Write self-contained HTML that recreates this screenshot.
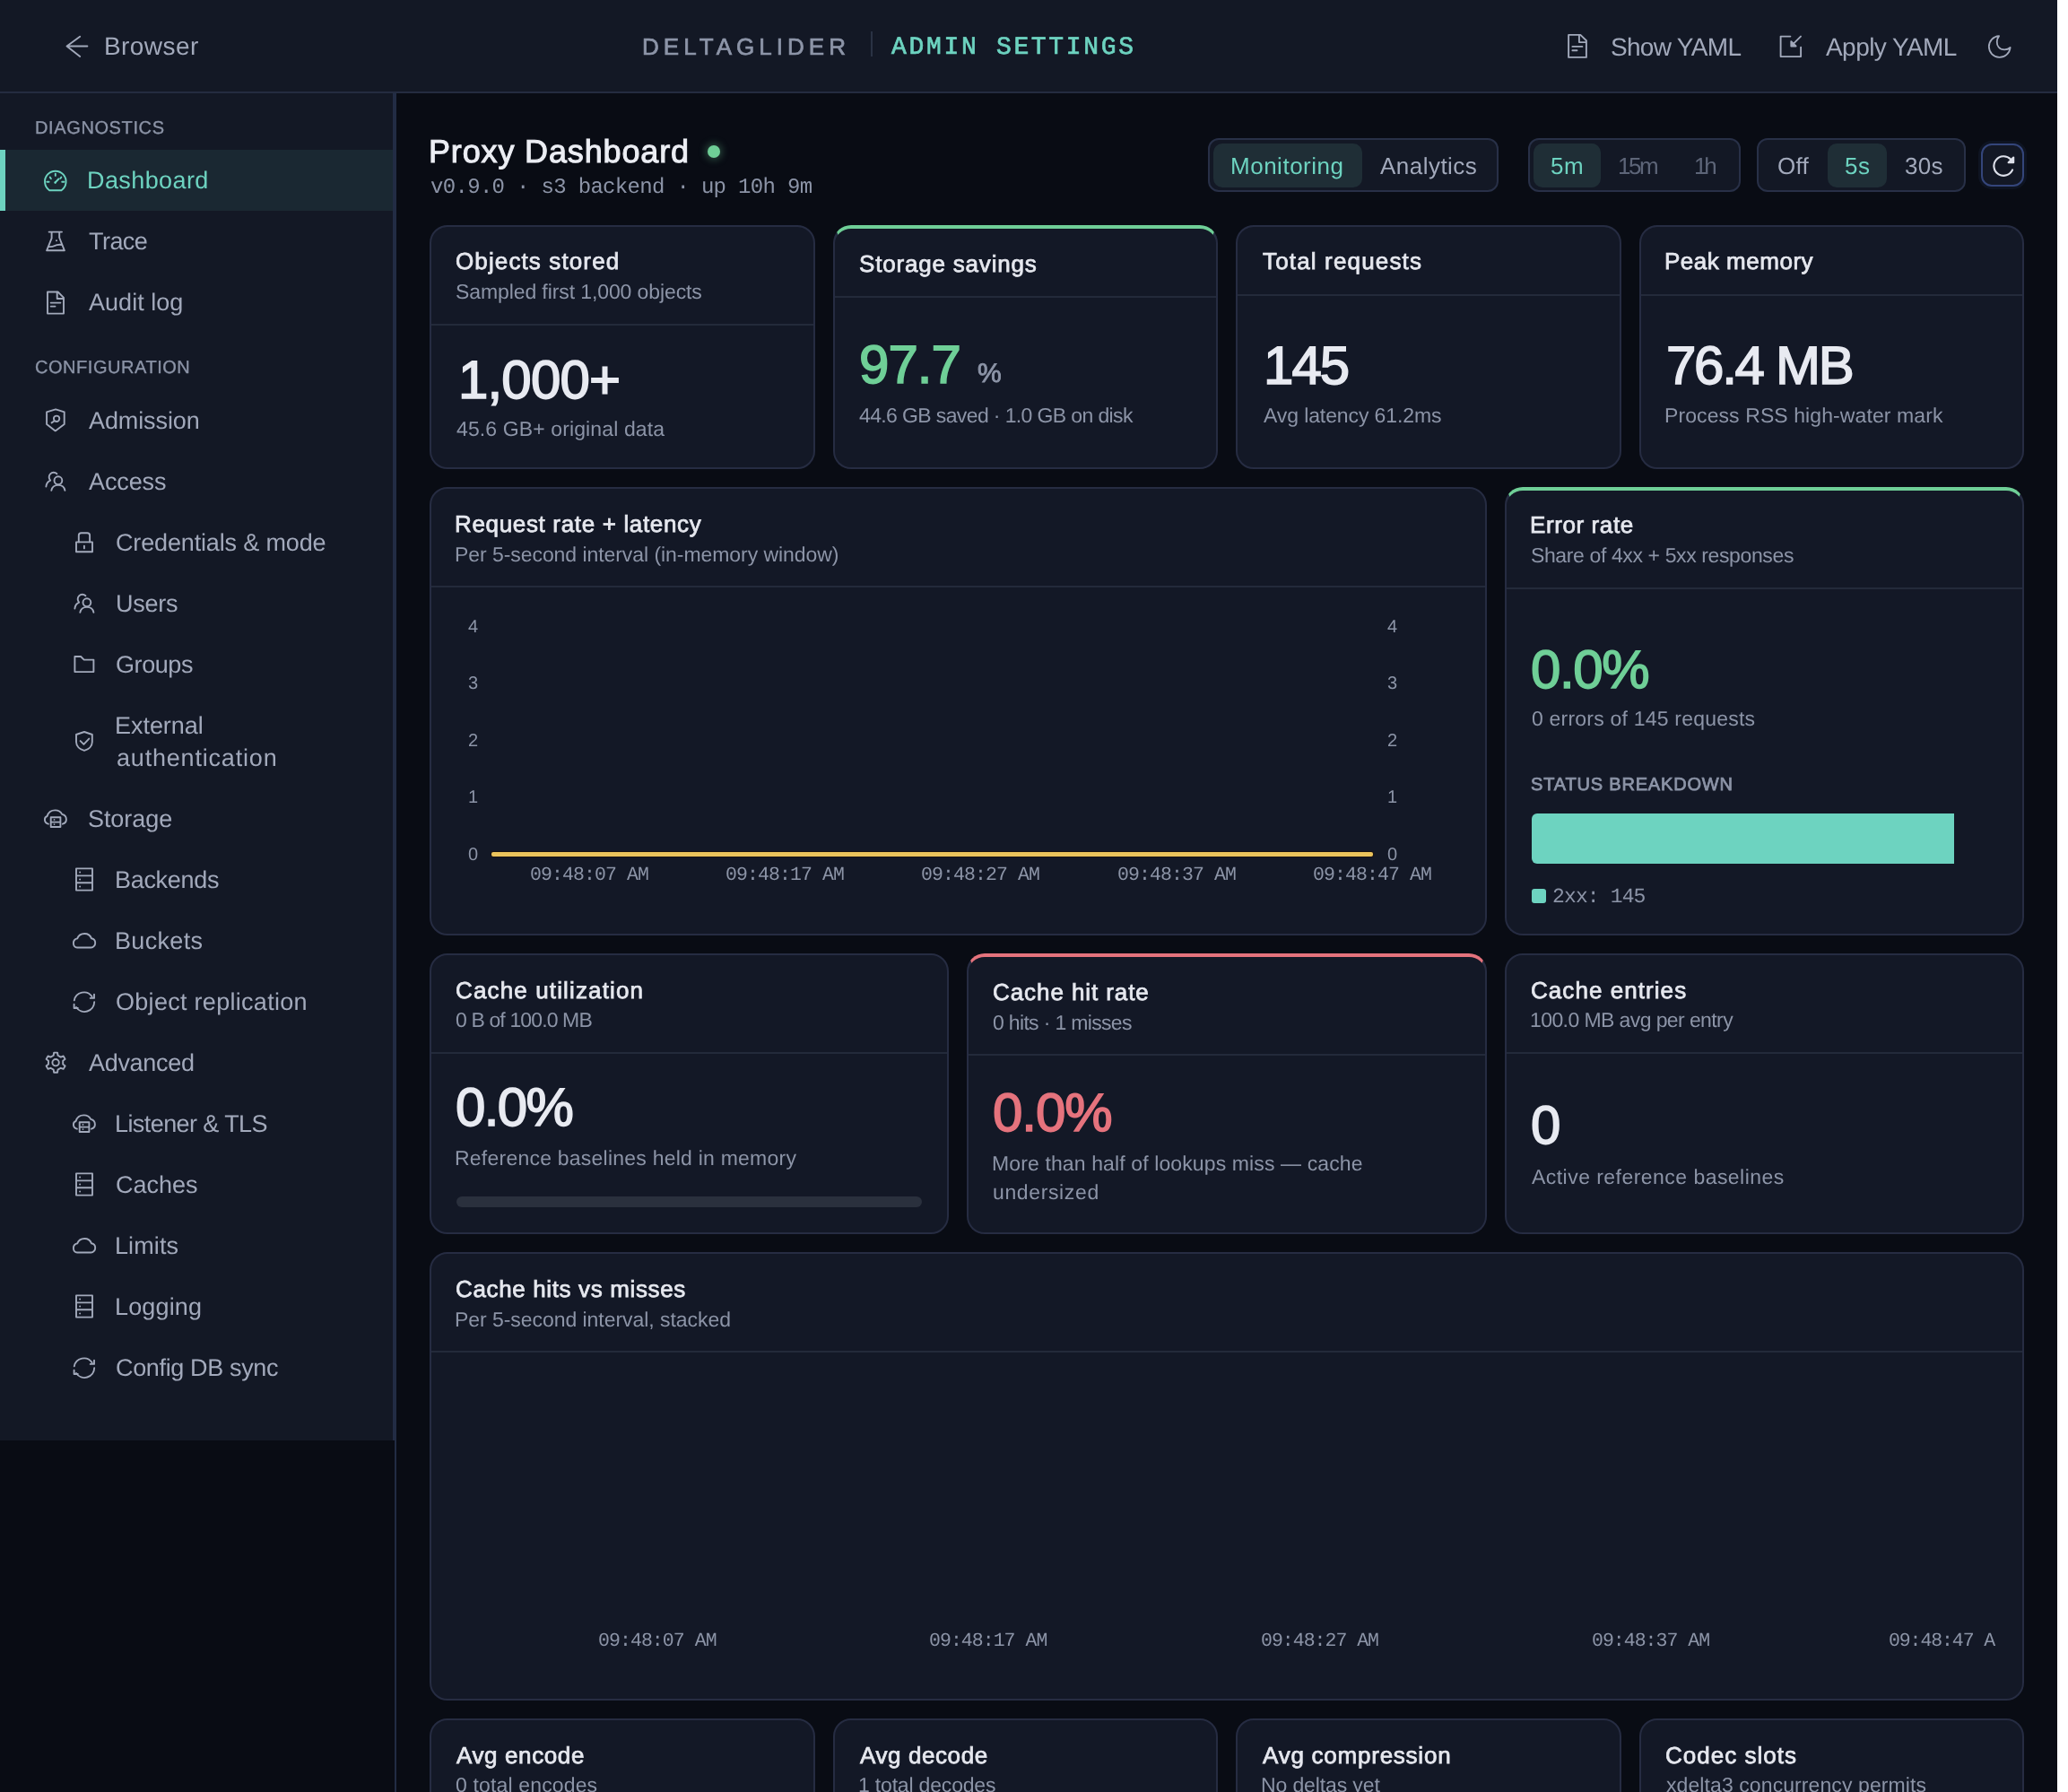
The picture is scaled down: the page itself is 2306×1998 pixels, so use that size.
<!DOCTYPE html>
<html><head><meta charset="utf-8"><title>DeltaGlider Admin Settings</title>
<style>
*{margin:0;padding:0;box-sizing:border-box}
html,body{width:2306px;height:1998px;overflow:hidden;background:#ffffff}
body{font-family:"Liberation Sans",sans-serif;position:relative}
#app{position:absolute;left:0;top:0;width:2294px;height:1998px;overflow:hidden;background:#090c14}
.t{position:absolute;white-space:nowrap;line-height:1;-webkit-font-smoothing:antialiased;will-change:transform;text-rendering:geometricPrecision}
.r{position:absolute}
.ic{position:absolute;overflow:visible}
</style></head><body><div id="app">
<div class="r" style="left:0px;top:0px;width:2294px;height:102px;background:#131825"></div>
<div class="r" style="left:0px;top:102px;width:2294px;height:2px;background:#242c40"></div>
<svg class="ic" style="left:70.0px;top:36.0px;color:#a2a9bb" width="32" height="32" viewBox="0 0 32 32" fill="none" stroke="currentColor" stroke-width="1.9" stroke-linecap="round" stroke-linejoin="round"><path d="M27.4 15.5H4.6M19.2 4.7L4.5 15.5L19.2 26.9"/></svg>
<div class="t " style="left:115.6px;top:38.3px;font-size:28px;color:#a2a9bb;letter-spacing:0.42px;">Browser</div>
<div class="t " style="left:715.9px;top:39.3px;font-size:26px;color:#8d95a8;-webkit-text-stroke:0.70px #8d95a8;letter-spacing:5.02px;">DELTAGLIDER</div>
<div class="r" style="left:971px;top:35px;width:2px;height:28px;background:#2a3244"></div>
<div class="t " style="left:993.8px;top:39.5px;font-size:28px;color:#6dd3c0;font-family:'Liberation Mono',monospace;letter-spacing:2.68px;-webkit-text-stroke:0.7px #6dd3c0;">ADMIN SETTINGS</div>
<svg class="ic" style="left:1743.0px;top:36.0px;color:#a2a9bb" width="32" height="32" viewBox="0 0 32 32" fill="none" stroke="currentColor" stroke-width="1.9" stroke-linecap="round" stroke-linejoin="round"><path d="M6.1 2.9H19.3L25.9 9.3V27.9H6.1Z"/><path d="M17.9 3.2V11.1H25.6M10.4 15.9H21.4M10.4 20.2H15.5"/></svg>
<div class="t " style="left:1796.3px;top:38.7px;font-size:28px;color:#a2a9bb;letter-spacing:-0.69px;">Show YAML</div>
<svg class="ic" style="left:1981.0px;top:36.0px;color:#a2a9bb" width="32" height="32" viewBox="0 0 32 32" fill="none" stroke="currentColor" stroke-width="1.9" stroke-linecap="round" stroke-linejoin="round"><path d="M15.4 4.6H4.6V27.1H27.1V16.6M27 4.6L18 13.6"/><path d="M16.3 10.2V15.5H21.6Z" fill="currentColor"/></svg>
<div class="t " style="left:2035.9px;top:38.7px;font-size:28px;color:#a2a9bb;letter-spacing:-0.56px;">Apply YAML</div>
<svg class="ic" style="left:2213.0px;top:36.0px;color:#a2a9bb" width="32" height="32" viewBox="0 0 32 32" fill="none" stroke="currentColor" stroke-width="1.8" stroke-linecap="round" stroke-linejoin="round"><path d="M16.1 4.1A11.9 11.9 0 1 0 28.6 17C25.5 20 19 20.5 15.6 16.5C13.2 13.7 13 8 16.1 4.1Z"/></svg>
<div class="r" style="left:0px;top:104px;width:438px;height:1502px;background:#131825"></div>
<div class="r" style="left:438px;top:104px;width:2px;height:1502px;background:#222c44"></div>
<div class="r" style="left:440px;top:104px;width:2px;height:1894px;background:#222c44"></div>
<div class="t " style="left:39.4px;top:132.8px;font-size:20px;color:#8c94a7;-webkit-text-stroke:0.35px #8c94a7;letter-spacing:0.62px;">DIAGNOSTICS</div>
<div class="r" style="left:0px;top:167px;width:438px;height:68px;background:#1a2832"></div>
<div class="r" style="left:0px;top:167px;width:6px;height:68px;background:#6dd3c0"></div>
<div class="t " style="left:39.0px;top:400.1px;font-size:20px;color:#8c94a7;-webkit-text-stroke:0.35px #8c94a7;letter-spacing:0.54px;">CONFIGURATION</div>
<div class="t " style="left:97.1px;top:188.1px;font-size:27px;color:#6dd3c0;letter-spacing:0.4px;">Dashboard</div>
<svg class="ic" style="left:46.0px;top:184.5px;color:#6dd3c0" width="32" height="32" viewBox="0 0 32 32" fill="none" stroke="currentColor" stroke-width="1.9" stroke-linecap="round" stroke-linejoin="round"><path d="M9.1 27.2A11.8 11.8 0 1 1 22.5 27.2Z"/><path d="M15.8 8.6V10.9M9.8 12.6L10.9 14.2M22.3 12.6L21.3 14M6.3 17.7H8.6M23.2 17.7H25.5M15.6 18.5L19.4 14.5"/><circle cx="15.6" cy="18.5" r="1.2" fill="currentColor" stroke="none"/></svg>
<div class="t " style="left:98.7px;top:256.1px;font-size:27px;color:#a2a9bb;letter-spacing:-0.55px;">Trace</div>
<svg class="ic" style="left:46.0px;top:252.5px;color:#a2a9bb" width="32" height="32" viewBox="0 0 32 32" fill="none" stroke="currentColor" stroke-width="1.9" stroke-linecap="round" stroke-linejoin="round"><g transform="translate(0,-1)"><path d="M8.6 6.6H23M11.6 6.9V13.7L6.1 27.3H25.9L20.2 13V6.9M8.9 23C12.5 23.7 15.5 21.5 17.5 21.1C19.6 20.7 21.5 20.7 23.2 21"/><circle cx="17" cy="16.2" r="1" fill="currentColor" stroke="none"/></g></svg>
<div class="t " style="left:99.2px;top:324.1px;font-size:27px;color:#a2a9bb;letter-spacing:0.03px;">Audit log</div>
<svg class="ic" style="left:46.0px;top:320.5px;color:#a2a9bb" width="32" height="32" viewBox="0 0 32 32" fill="none" stroke="currentColor" stroke-width="1.9" stroke-linecap="round" stroke-linejoin="round"><g transform="translate(0,-1)"><path d="M7 5.5H18.6L25 11.9V29.6H7Z"/><path d="M17.7 5.8V13H24.7M10.7 17.6H21.4M10.7 21.6H15.5"/></g></svg>
<div class="t " style="left:99.2px;top:456.1px;font-size:27px;color:#a2a9bb;letter-spacing:-0.1px;">Admission</div>
<svg class="ic" style="left:46.0px;top:452.5px;color:#a2a9bb" width="32" height="32" viewBox="0 0 32 32" fill="none" stroke="currentColor" stroke-width="1.9" stroke-linecap="round" stroke-linejoin="round"><g transform="translate(0,-1)"><path d="M6.1 7.3L16.1 4.4L25.7 7.3V21L15.7 28.4L6.1 21Z"/><circle cx="17.1" cy="14.8" r="3.2"/><path d="M14.8 17.2L11.6 19.4"/></g></svg>
<div class="t " style="left:99.2px;top:524.1px;font-size:27px;color:#a2a9bb;letter-spacing:-0.1px;">Access</div>
<svg class="ic" style="left:46.0px;top:520.5px;color:#a2a9bb" width="32" height="32" viewBox="0 0 32 32" fill="none" stroke="currentColor" stroke-width="1.9" stroke-linecap="round" stroke-linejoin="round"><g transform="translate(0,-1)"><circle cx="18.9" cy="15.7" r="4.4"/><path d="M11.3 26.9C12 23 15 20.9 18.9 20.9C22.8 20.9 25.8 23 26.4 26.9"/><path d="M17.4 8.3A4.4 4.4 0 1 0 10.2 15.6C7.6 16.6 5.8 19 5.4 22.5"/></g></svg>
<div class="t " style="left:129.2px;top:592.1px;font-size:27px;color:#a2a9bb;letter-spacing:-0.15px;">Credentials &amp; mode</div>
<svg class="ic" style="left:78.0px;top:588.5px;color:#a2a9bb" width="32" height="32" viewBox="0 0 32 32" fill="none" stroke="currentColor" stroke-width="1.9" stroke-linecap="round" stroke-linejoin="round"><g transform="translate(0,-1)"><path d="M7 16.4H25V27.3H7Z"/><path d="M9.8 16.4V9Q9.8 6.2 12.6 6.2H19.3Q22.1 6.2 22.1 9V16.4M15.9 20.6V23.4"/></g></svg>
<div class="t " style="left:128.5px;top:660.1px;font-size:27px;color:#a2a9bb;letter-spacing:-0.27px;">Users</div>
<svg class="ic" style="left:78.0px;top:656.5px;color:#a2a9bb" width="32" height="32" viewBox="0 0 32 32" fill="none" stroke="currentColor" stroke-width="1.9" stroke-linecap="round" stroke-linejoin="round"><g transform="translate(0,-1)"><circle cx="18.9" cy="15.7" r="4.4"/><path d="M11.3 26.9C12 23 15 20.9 18.9 20.9C22.8 20.9 25.8 23 26.4 26.9"/><path d="M17.4 8.3A4.4 4.4 0 1 0 10.2 15.6C7.6 16.6 5.8 19 5.4 22.5"/></g></svg>
<div class="t " style="left:129.2px;top:728.1px;font-size:27px;color:#a2a9bb;letter-spacing:-0.42px;">Groups</div>
<svg class="ic" style="left:78.0px;top:724.5px;color:#a2a9bb" width="32" height="32" viewBox="0 0 32 32" fill="none" stroke="currentColor" stroke-width="1.9" stroke-linecap="round" stroke-linejoin="round"><g transform="translate(0,-1)"><path d="M5.4 8H12.1L15.7 11.6H26.4V25.1H5.4Z"/></g></svg>
<div class="t " style="left:98.1px;top:900.1px;font-size:27px;color:#a2a9bb;letter-spacing:-0.07px;">Storage</div>
<svg class="ic" style="left:46.0px;top:896.5px;color:#a2a9bb" width="32" height="32" viewBox="0 0 32 32" fill="none" stroke="currentColor" stroke-width="1.9" stroke-linecap="round" stroke-linejoin="round"><path d="M7.9 21.7C5.5 20.8 3.9 19.1 3.9 16.9C3.9 14.8 5.2 13.4 6.6 13C7.8 9 11.3 6.4 15.5 6.4C19 6.4 21.8 8.1 23.2 10.9C26 11.5 27.9 13.9 27.9 16.8C27.9 19.1 26.2 21 23.9 21.7"/><path d="M10.7 14.2H21.4V25H10.7Z M10.7 19.6H21.4"/><circle cx="14.5" cy="16.9" r="0.9" fill="currentColor" stroke="none"/><circle cx="14.5" cy="22.1" r="0.9" fill="currentColor" stroke="none"/></svg>
<div class="t " style="left:128.4px;top:968.1px;font-size:27px;color:#a2a9bb;letter-spacing:-0.3px;">Backends</div>
<svg class="ic" style="left:78.0px;top:964.5px;color:#a2a9bb" width="32" height="32" viewBox="0 0 32 32" fill="none" stroke="currentColor" stroke-width="1.9" stroke-linecap="round" stroke-linejoin="round"><path d="M7 3.4H25V27.6H7Z M7 11.4H25M7 19.25H25"/><circle cx="11.1" cy="7.6" r="1" fill="currentColor" stroke="none"/><circle cx="11.1" cy="15.5" r="1" fill="currentColor" stroke="none"/><circle cx="11.1" cy="23.4" r="1" fill="currentColor" stroke="none"/></svg>
<div class="t " style="left:128.4px;top:1036.1px;font-size:27px;color:#a2a9bb;letter-spacing:0.32px;">Buckets</div>
<svg class="ic" style="left:78.0px;top:1032.5px;color:#a2a9bb" width="32" height="32" viewBox="0 0 32 32" fill="none" stroke="currentColor" stroke-width="1.9" stroke-linecap="round" stroke-linejoin="round"><path d="M8 23.5H23.5C26.1 23.5 28.2 21.1 28.2 18.3C28.2 15.7 26.5 13.8 24 13.3C22.8 10.1 19.8 8 16.3 8C12.5 8 9.3 10.3 8.2 13.4C5.7 14 3.9 16 3.9 18.5C3.9 21.3 5.7 23.5 8 23.5Z"/></svg>
<div class="t " style="left:129.3px;top:1104.1px;font-size:27px;color:#a2a9bb;letter-spacing:0.29px;">Object replication</div>
<svg class="ic" style="left:78.0px;top:1100.5px;color:#a2a9bb" width="32" height="32" viewBox="0 0 32 32" fill="none" stroke="currentColor" stroke-width="1.9" stroke-linecap="round" stroke-linejoin="round"><path d="M4.8 14.4A11 11 0 0 1 24.6 10.1M27 7.6V11.9H22.7M27.2 16.1A11 11 0 0 1 7 22M4.6 18.8V23H8.8"/></svg>
<div class="t " style="left:99.2px;top:1172.1px;font-size:27px;color:#a2a9bb;letter-spacing:-0.31px;">Advanced</div>
<svg class="ic" style="left:46.0px;top:1168.5px;color:#a2a9bb" width="32" height="32" viewBox="0 0 32 32" fill="none" stroke="currentColor" stroke-width="1.9" stroke-linecap="round" stroke-linejoin="round"><path d="M13.67 7.76 L14.16 4.67 L18.04 4.67 L18.53 7.76 L21.76 9.63 L24.68 8.50 L26.62 11.87 L24.19 13.83 L24.19 17.57 L26.62 19.53 L24.68 22.90 L21.76 21.77 L18.53 23.64 L18.04 26.73 L14.16 26.73 L13.67 23.64 L10.44 21.77 L7.52 22.90 L5.58 19.53 L8.01 17.57 L8.01 13.83 L5.58 11.87 L7.52 8.50 L10.44 9.63Z"/><circle cx="16.1" cy="15.7" r="3.7"/></svg>
<div class="t " style="left:128.4px;top:1240.1px;font-size:27px;color:#a2a9bb;letter-spacing:-0.58px;">Listener &amp; TLS</div>
<svg class="ic" style="left:78.0px;top:1236.5px;color:#a2a9bb" width="32" height="32" viewBox="0 0 32 32" fill="none" stroke="currentColor" stroke-width="1.9" stroke-linecap="round" stroke-linejoin="round"><path d="M7.9 21.7C5.5 20.8 3.9 19.1 3.9 16.9C3.9 14.8 5.2 13.4 6.6 13C7.8 9 11.3 6.4 15.5 6.4C19 6.4 21.8 8.1 23.2 10.9C26 11.5 27.9 13.9 27.9 16.8C27.9 19.1 26.2 21 23.9 21.7"/><path d="M10.7 14.2H21.4V25H10.7Z M10.7 19.6H21.4"/><circle cx="14.5" cy="16.9" r="0.9" fill="currentColor" stroke="none"/><circle cx="14.5" cy="22.1" r="0.9" fill="currentColor" stroke="none"/></svg>
<div class="t " style="left:129.2px;top:1308.1px;font-size:27px;color:#a2a9bb;letter-spacing:-0.02px;">Caches</div>
<svg class="ic" style="left:78.0px;top:1304.5px;color:#a2a9bb" width="32" height="32" viewBox="0 0 32 32" fill="none" stroke="currentColor" stroke-width="1.9" stroke-linecap="round" stroke-linejoin="round"><path d="M7 3.4H25V27.6H7Z M7 11.4H25M7 19.25H25"/><circle cx="11.1" cy="7.6" r="1" fill="currentColor" stroke="none"/><circle cx="11.1" cy="15.5" r="1" fill="currentColor" stroke="none"/><circle cx="11.1" cy="23.4" r="1" fill="currentColor" stroke="none"/></svg>
<div class="t " style="left:128.4px;top:1376.1px;font-size:27px;color:#a2a9bb;letter-spacing:0.1px;">Limits</div>
<svg class="ic" style="left:78.0px;top:1372.5px;color:#a2a9bb" width="32" height="32" viewBox="0 0 32 32" fill="none" stroke="currentColor" stroke-width="1.9" stroke-linecap="round" stroke-linejoin="round"><path d="M8 23.5H23.5C26.1 23.5 28.2 21.1 28.2 18.3C28.2 15.7 26.5 13.8 24 13.3C22.8 10.1 19.8 8 16.3 8C12.5 8 9.3 10.3 8.2 13.4C5.7 14 3.9 16 3.9 18.5C3.9 21.3 5.7 23.5 8 23.5Z"/></svg>
<div class="t " style="left:128.4px;top:1444.1px;font-size:27px;color:#a2a9bb;letter-spacing:0.15px;">Logging</div>
<svg class="ic" style="left:78.0px;top:1440.5px;color:#a2a9bb" width="32" height="32" viewBox="0 0 32 32" fill="none" stroke="currentColor" stroke-width="1.9" stroke-linecap="round" stroke-linejoin="round"><path d="M7 3.4H25V27.6H7Z M7 11.4H25M7 19.25H25"/><circle cx="11.1" cy="7.6" r="1" fill="currentColor" stroke="none"/><circle cx="11.1" cy="15.5" r="1" fill="currentColor" stroke="none"/><circle cx="11.1" cy="23.4" r="1" fill="currentColor" stroke="none"/></svg>
<div class="t " style="left:129.2px;top:1512.1px;font-size:27px;color:#a2a9bb;letter-spacing:-0.35px;">Config DB sync</div>
<svg class="ic" style="left:78.0px;top:1508.5px;color:#a2a9bb" width="32" height="32" viewBox="0 0 32 32" fill="none" stroke="currentColor" stroke-width="1.9" stroke-linecap="round" stroke-linejoin="round"><path d="M4.8 14.4A11 11 0 0 1 24.6 10.1M27 7.6V11.9H22.7M27.2 16.1A11 11 0 0 1 7 22M4.6 18.8V23H8.8"/></svg>
<div class="t " style="left:128.4px;top:796.1px;font-size:27px;color:#a2a9bb;letter-spacing:-0.04px;">External</div>
<div class="t " style="left:129.5px;top:832.1px;font-size:27px;color:#a2a9bb;letter-spacing:0.81px;">authentication</div>
<svg class="ic" style="left:78.0px;top:810.5px;color:#a2a9bb" width="32" height="32" viewBox="0 0 32 32" fill="none" stroke="currentColor" stroke-width="1.9" stroke-linecap="round" stroke-linejoin="round"><path d="M16 5L24.8 8V16.3C24.8 20.8 21 24.5 16 25.9C11 24.5 7 20.8 7 16.3V8Z"/><path d="M11.6 15.1L15.4 18.9L21.3 12.6"/></svg>
<div class="r" style="left:442px;top:104px;width:1852px;height:1894px;background:#090c14"></div>
<div class="t " style="left:477.6px;top:150.7px;font-size:36px;color:#eceef4;-webkit-text-stroke:1.00px #eceef4;letter-spacing:0.85px;">Proxy Dashboard</div>
<div class="r" style="left:789px;top:162px;width:14px;height:14px;border-radius:50%;background:#6fcf97;box-shadow:0 0 8px 2px rgba(111,207,151,.35)"></div>
<div class="t " style="left:479.8px;top:198.0px;font-size:24px;color:#8c94a7;font-family:'Liberation Mono',monospace;letter-spacing:-0.68px;">v0.9.0 · s3 backend · up 10h 9m</div>
<div class="r" style="left:1347px;top:154px;width:324px;height:60px;background:#131825;border:2px solid #283047;border-radius:12px"></div>
<div class="r" style="left:1353px;top:160px;width:166px;height:49px;background:#1f2e36;border-radius:10px"></div>
<div class="t " style="left:1371.6px;top:172.0px;font-size:26px;color:#6dd3c0;letter-spacing:0.51px;">Monitoring</div>
<div class="t " style="left:1538.9px;top:172.0px;font-size:26px;color:#a2a9bb;letter-spacing:0.47px;">Analytics</div>
<div class="r" style="left:1704px;top:154px;width:237px;height:60px;background:#131825;border:2px solid #283047;border-radius:12px"></div>
<div class="r" style="left:1710px;top:160px;width:75px;height:49px;background:#1f2e36;border-radius:10px"></div>
<div class="t " style="left:1729.0px;top:172.0px;font-size:26px;color:#6dd3c0;letter-spacing:0.5px;">5m</div>
<div class="t " style="left:1804.0px;top:172.0px;font-size:26px;color:#5d6578;letter-spacing:-2.45px;">15m</div>
<div class="t " style="left:1888.7px;top:172.0px;font-size:26px;color:#5d6578;letter-spacing:-3.2px;">1h</div>
<div class="r" style="left:1959px;top:154px;width:233px;height:60px;background:#131825;border:2px solid #283047;border-radius:12px"></div>
<div class="r" style="left:2038px;top:160px;width:66px;height:49px;background:#1f2e36;border-radius:10px"></div>
<div class="t " style="left:1982.4px;top:172.0px;font-size:26px;color:#a2a9bb;letter-spacing:0.25px;">Off</div>
<div class="t " style="left:2057.0px;top:172.0px;font-size:26px;color:#6dd3c0;letter-spacing:0.5px;">5s</div>
<div class="t " style="left:2124.0px;top:172.0px;font-size:26px;color:#a2a9bb;letter-spacing:0.25px;">30s</div>
<div class="r" style="left:2209px;top:160px;width:48px;height:48px;background:#131825;border:2px solid #34457a;border-radius:12px;box-shadow:0 0 0 3px rgba(60,80,140,.12)"></div>
<svg class="ic" style="left:2217.0px;top:168.0px;color:#dde0ea" width="32" height="32" viewBox="0 0 32 32" fill="none" stroke="currentColor" stroke-width="2.1" stroke-linecap="round" stroke-linejoin="round"><path d="M27.1 21.4A10.8 10.8 0 1 1 25 9.6"/><path d="M28.2 7.6V13.2H22.6Z" fill="currentColor"/></svg>
<div class="r" style="left:479px;top:251px;width:429.5px;height:272px;background:#131826;border:2px solid #262c42;border-radius:20px;"></div>
<div class="r" style="left:481px;top:361px;width:425.5px;height:2px;background:#232a3a"></div>
<div class="t " style="left:507.8px;top:278.0px;font-size:26px;color:#e6e8ef;-webkit-text-stroke:0.75px #e6e8ef;letter-spacing:1.12px;">Objects stored</div>
<div class="t " style="left:508.0px;top:314.1px;font-size:23px;color:#8c94a7;letter-spacing:-0.1px;">Sampled first 1,000 objects</div>
<div class="t " style="left:511.1px;top:393.7px;font-size:60px;color:#e8eaf1;-webkit-text-stroke:1.60px #e8eaf1;letter-spacing:-0.84px;">1,000+</div>
<div class="t " style="left:508.5px;top:466.5px;font-size:23px;color:#8c94a7;letter-spacing:0.12px;">45.6 GB+ original data</div>
<div class="r" style="left:928.5px;top:251px;width:429.5px;height:272px;background:#131826;border:2px solid #262c42;border-radius:20px;border-top:4px solid #6fcf97;"></div>
<div class="r" style="left:930.5px;top:330px;width:425.5px;height:2px;background:#232a3a"></div>
<div class="t " style="left:957.5px;top:281.0px;font-size:26px;color:#e6e8ef;-webkit-text-stroke:0.75px #e6e8ef;letter-spacing:0.81px;">Storage savings</div>
<div class="t " style="left:958.2px;top:377.2px;font-size:60px;color:#6fcf97;-webkit-text-stroke:1.60px #6fcf97;letter-spacing:-0.97px;">97.7</div>
<div class="t " style="left:1089.9px;top:401.6px;font-size:30px;color:#8c94a7;-webkit-text-stroke:0.90px #8c94a7;">%</div>
<div class="t " style="left:958.2px;top:452.0px;font-size:23px;color:#8c94a7;letter-spacing:-0.62px;">44.6 GB saved · 1.0 GB on disk</div>
<div class="r" style="left:1378px;top:251px;width:429.5px;height:272px;background:#131826;border:2px solid #262c42;border-radius:20px;"></div>
<div class="r" style="left:1380px;top:328px;width:425.5px;height:2px;background:#232a3a"></div>
<div class="t " style="left:1408.1px;top:278.3px;font-size:26px;color:#e6e8ef;-webkit-text-stroke:0.75px #e6e8ef;letter-spacing:1.16px;">Total requests</div>
<div class="t " style="left:1409.4px;top:377.5px;font-size:60px;color:#e8eaf1;-webkit-text-stroke:1.60px #e8eaf1;letter-spacing:-1.95px;">145</div>
<div class="t " style="left:1408.7px;top:451.5px;font-size:23px;color:#8c94a7;letter-spacing:-0.11px;">Avg latency 61.2ms</div>
<div class="r" style="left:1827.5px;top:251px;width:429.5px;height:272px;background:#131826;border:2px solid #262c42;border-radius:20px;"></div>
<div class="r" style="left:1829.5px;top:328px;width:425.5px;height:2px;background:#232a3a"></div>
<div class="t " style="left:1855.5px;top:278.3px;font-size:26px;color:#e6e8ef;-webkit-text-stroke:0.75px #e6e8ef;letter-spacing:0.52px;">Peak memory</div>
<div class="t " style="left:1857.5px;top:377.5px;font-size:60px;color:#e8eaf1;-webkit-text-stroke:1.60px #e8eaf1;letter-spacing:-2.28px;">76.4 MB</div>
<div class="t " style="left:1855.7px;top:451.5px;font-size:23px;color:#8c94a7;letter-spacing:0.09px;">Process RSS high-water mark</div>
<div class="r" style="left:479px;top:543px;width:1178.67px;height:500px;background:#131826;border:2px solid #262c42;border-radius:20px;"></div>
<div class="r" style="left:481px;top:653px;width:1174.67px;height:2px;background:#232a3a"></div>
<div class="t " style="left:506.8px;top:571.4px;font-size:26px;color:#e6e8ef;-webkit-text-stroke:0.75px #e6e8ef;letter-spacing:0.66px;">Request rate + latency</div>
<div class="t " style="left:507.1px;top:606.5px;font-size:23px;color:#8c94a7;letter-spacing:-0.06px;">Per 5-second interval (in-memory window)</div>
<div class="t " style="left:522.0px;top:688.5px;font-size:20px;color:#8c94a7;">4</div>
<div class="t " style="left:1547.0px;top:688.5px;font-size:20px;color:#8c94a7;">4</div>
<div class="t " style="left:522.0px;top:752.0px;font-size:20px;color:#8c94a7;">3</div>
<div class="t " style="left:1547.0px;top:752.0px;font-size:20px;color:#8c94a7;">3</div>
<div class="t " style="left:522.0px;top:815.6px;font-size:20px;color:#8c94a7;">2</div>
<div class="t " style="left:1547.0px;top:815.6px;font-size:20px;color:#8c94a7;">2</div>
<div class="t " style="left:522.0px;top:879.1px;font-size:20px;color:#8c94a7;">1</div>
<div class="t " style="left:1547.0px;top:879.1px;font-size:20px;color:#8c94a7;">1</div>
<div class="t " style="left:522.0px;top:942.7px;font-size:20px;color:#8c94a7;">0</div>
<div class="t " style="left:1547.0px;top:942.7px;font-size:20px;color:#8c94a7;">0</div>
<div class="r" style="left:548px;top:950px;width:983px;height:5px;background:#ebc35c;border-radius:2px;box-shadow:0 0 0 1px rgba(30,15,5,.6)"></div>
<div class="t " style="left:590.7px;top:966.0px;font-size:21.5px;color:#8c94a7;font-family:'Liberation Mono',monospace;letter-spacing:-0.89px;">09:48:07 AM</div>
<div class="t " style="left:809.0px;top:966.0px;font-size:21.5px;color:#8c94a7;font-family:'Liberation Mono',monospace;letter-spacing:-0.89px;">09:48:17 AM</div>
<div class="t " style="left:1027.3px;top:966.0px;font-size:21.5px;color:#8c94a7;font-family:'Liberation Mono',monospace;letter-spacing:-0.89px;">09:48:27 AM</div>
<div class="t " style="left:1245.6px;top:966.0px;font-size:21.5px;color:#8c94a7;font-family:'Liberation Mono',monospace;letter-spacing:-0.89px;">09:48:37 AM</div>
<div class="t " style="left:1463.9px;top:966.0px;font-size:21.5px;color:#8c94a7;font-family:'Liberation Mono',monospace;letter-spacing:-0.89px;">09:48:47 AM</div>
<div class="r" style="left:1677.67px;top:543px;width:579.3299999999999px;height:500px;background:#131826;border:2px solid #262c42;border-radius:20px;border-top:4px solid #6fcf97;"></div>
<div class="r" style="left:1679.67px;top:655px;width:575.3299999999999px;height:2px;background:#232a3a"></div>
<div class="t " style="left:1706.3px;top:572.0px;font-size:26px;color:#e6e8ef;-webkit-text-stroke:0.75px #e6e8ef;letter-spacing:0.6px;">Error rate</div>
<div class="t " style="left:1707.4px;top:607.5px;font-size:23px;color:#8c94a7;letter-spacing:-0.38px;">Share of 4xx + 5xx responses</div>
<div class="t " style="left:1706.7px;top:717.2px;font-size:60px;color:#6fcf97;-webkit-text-stroke:1.60px #6fcf97;letter-spacing:-1.4px;">0.0%</div>
<div class="t " style="left:1707.5px;top:789.8px;font-size:23px;color:#8c94a7;letter-spacing:0.21px;">0 errors of 145 requests</div>
<div class="t " style="left:1707.1px;top:865.1px;font-size:20px;color:#8c94a7;-webkit-text-stroke:0.80px #8c94a7;letter-spacing:0.82px;">STATUS BREAKDOWN</div>
<div class="r" style="left:1708px;top:907px;width:471px;height:56px;background:#6dd3c0;border-radius:6px 0 0 6px"></div>
<div class="r" style="left:1708px;top:991px;width:16px;height:16px;background:#6dd3c0;border-radius:3px"></div>
<div class="t " style="left:1731.4px;top:988.7px;font-size:23px;color:#8c94a7;font-family:'Liberation Mono',monospace;letter-spacing:-0.86px;">2xx: 145</div>
<div class="r" style="left:479px;top:1063px;width:579.3299999999999px;height:313px;background:#131826;border:2px solid #262c42;border-radius:20px;"></div>
<div class="r" style="left:481px;top:1173px;width:575.3299999999999px;height:2px;background:#232a3a"></div>
<div class="t " style="left:507.6px;top:1090.7px;font-size:26px;color:#e6e8ef;-webkit-text-stroke:0.75px #e6e8ef;letter-spacing:1.14px;">Cache utilization</div>
<div class="t " style="left:508.1px;top:1126.2px;font-size:23px;color:#8c94a7;letter-spacing:-0.87px;">0 B of 100.0 MB</div>
<div class="t " style="left:508.3px;top:1205.2px;font-size:60px;color:#e8eaf1;-webkit-text-stroke:1.60px #e8eaf1;letter-spacing:-1.63px;">0.0%</div>
<div class="t " style="left:507.1px;top:1280.0px;font-size:23px;color:#8c94a7;letter-spacing:0.23px;">Reference baselines held in memory</div>
<div class="r" style="left:509px;top:1334px;width:519px;height:12px;background:#2a303d;border-radius:6px"></div>
<div class="r" style="left:1078.33px;top:1063px;width:579.3400000000001px;height:313px;background:#131826;border:2px solid #262c42;border-radius:20px;border-top:4px solid #e5737d;"></div>
<div class="r" style="left:1080.33px;top:1175px;width:575.3400000000001px;height:2px;background:#232a3a"></div>
<div class="t " style="left:1107.0px;top:1093.0px;font-size:26px;color:#e6e8ef;-webkit-text-stroke:0.75px #e6e8ef;letter-spacing:0.92px;">Cache hit rate</div>
<div class="t " style="left:1107.4px;top:1129.1px;font-size:23px;color:#8c94a7;letter-spacing:-0.67px;">0 hits · 1 misses</div>
<div class="t " style="left:1107.2px;top:1211.0px;font-size:60px;color:#e5737d;-webkit-text-stroke:1.60px #e5737d;letter-spacing:-1.07px;">0.0%</div>
<div class="t " style="left:1106.4px;top:1285.8px;font-size:23px;color:#8c94a7;letter-spacing:0.12px;">More than half of lookups miss — cache</div>
<div class="t " style="left:1106.8px;top:1317.7px;font-size:23px;color:#8c94a7;letter-spacing:0.63px;">undersized</div>
<div class="r" style="left:1677.67px;top:1063px;width:579.3299999999999px;height:313px;background:#131826;border:2px solid #262c42;border-radius:20px;"></div>
<div class="r" style="left:1679.67px;top:1173px;width:575.3299999999999px;height:2px;background:#232a3a"></div>
<div class="t " style="left:1706.5px;top:1091.0px;font-size:26px;color:#e6e8ef;-webkit-text-stroke:0.75px #e6e8ef;letter-spacing:1.06px;">Cache entries</div>
<div class="t " style="left:1706.0px;top:1125.8px;font-size:23px;color:#8c94a7;letter-spacing:-0.59px;">100.0 MB avg per entry</div>
<div class="t " style="left:1707.1px;top:1225.2px;font-size:60px;color:#e8eaf1;-webkit-text-stroke:1.60px #e8eaf1;">0</div>
<div class="t " style="left:1707.8px;top:1300.5px;font-size:23px;color:#8c94a7;letter-spacing:0.46px;">Active reference baselines</div>
<div class="r" style="left:479px;top:1396px;width:1778px;height:500px;background:#131826;border:2px solid #262c42;border-radius:20px;"></div>
<div class="r" style="left:481px;top:1506px;width:1774px;height:2px;background:#232a3a"></div>
<div class="t " style="left:507.7px;top:1424.2px;font-size:26px;color:#e6e8ef;-webkit-text-stroke:0.75px #e6e8ef;letter-spacing:0.64px;">Cache hits vs misses</div>
<div class="t " style="left:507.1px;top:1459.5px;font-size:23px;color:#8c94a7;letter-spacing:-0.05px;">Per 5-second interval, stacked</div>
<div class="t " style="left:666.7px;top:1819.5px;font-size:21.5px;color:#8c94a7;font-family:'Liberation Mono',monospace;letter-spacing:-0.93px;">09:48:07 AM</div>
<div class="t " style="left:1036.2px;top:1819.5px;font-size:21.5px;color:#8c94a7;font-family:'Liberation Mono',monospace;letter-spacing:-0.96px;">09:48:17 AM</div>
<div class="t " style="left:1405.7px;top:1819.5px;font-size:21.5px;color:#8c94a7;font-family:'Liberation Mono',monospace;letter-spacing:-0.99px;">09:48:27 AM</div>
<div class="t " style="left:1775.0px;top:1819.5px;font-size:21.5px;color:#8c94a7;font-family:'Liberation Mono',monospace;letter-spacing:-0.98px;">09:48:37 AM</div>
<div class="t " style="left:2106.3px;top:1819.5px;font-size:21.5px;color:#8c94a7;font-family:'Liberation Mono',monospace;letter-spacing:-1.09px;">09:48:47 A</div>
<div class="r" style="left:479px;top:1916px;width:429.5px;height:184px;background:#131826;border:2px solid #262c42;border-radius:20px;"></div>
<div class="t " style="left:508.9px;top:1943.6px;font-size:26px;color:#e6e8ef;-webkit-text-stroke:0.75px #e6e8ef;letter-spacing:0.61px;">Avg encode</div>
<div class="t " style="left:508.1px;top:1979.0px;font-size:23px;color:#8c94a7;letter-spacing:0.15px;">0 total encodes</div>
<div class="r" style="left:928.5px;top:1916px;width:429.5px;height:184px;background:#131826;border:2px solid #262c42;border-radius:20px;"></div>
<div class="t " style="left:958.7px;top:1943.6px;font-size:26px;color:#e6e8ef;-webkit-text-stroke:0.75px #e6e8ef;letter-spacing:0.59px;">Avg decode</div>
<div class="t " style="left:957.0px;top:1979.0px;font-size:23px;color:#8c94a7;letter-spacing:-0.18px;">1 total decodes</div>
<div class="r" style="left:1378px;top:1916px;width:429.5px;height:184px;background:#131826;border:2px solid #262c42;border-radius:20px;"></div>
<div class="t " style="left:1408.1px;top:1943.6px;font-size:26px;color:#e6e8ef;-webkit-text-stroke:0.75px #e6e8ef;letter-spacing:0.76px;">Avg compression</div>
<div class="t " style="left:1406.3px;top:1979.0px;font-size:23px;color:#8c94a7;letter-spacing:-0.12px;">No deltas yet</div>
<div class="r" style="left:1827.5px;top:1916px;width:429.5px;height:184px;background:#131826;border:2px solid #262c42;border-radius:20px;"></div>
<div class="t " style="left:1856.5px;top:1943.6px;font-size:26px;color:#e6e8ef;-webkit-text-stroke:0.75px #e6e8ef;letter-spacing:1.01px;">Codec slots</div>
<div class="t " style="left:1857.5px;top:1979.0px;font-size:23px;color:#8c94a7;letter-spacing:0.09px;">xdelta3 concurrency permits</div>
</div></body></html>
